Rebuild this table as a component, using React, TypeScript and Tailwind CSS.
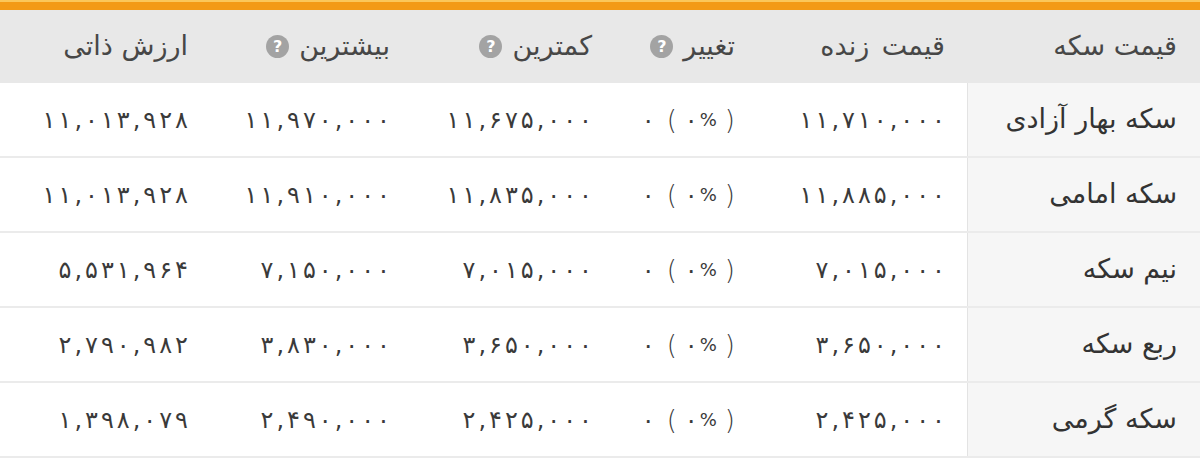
import React from "react";

const rows = [
  ["سکه بهار آزادی", "۱۱,۷۱۰,۰۰۰", "۱۱,۶۷۵,۰۰۰", "۱۱,۹۷۰,۰۰۰", "۱۱,۰۱۳,۹۲۸"],
  ["سکه امامی", "۱۱,۸۸۵,۰۰۰", "۱۱,۸۳۵,۰۰۰", "۱۱,۹۱۰,۰۰۰", "۱۱,۰۱۳,۹۲۸"],
  ["نیم سکه", "۷,۰۱۵,۰۰۰", "۷,۰۱۵,۰۰۰", "۷,۱۵۰,۰۰۰", "۵,۵۳۱,۹۶۴"],
  ["ربع سکه", "۳,۶۵۰,۰۰۰", "۳,۶۵۰,۰۰۰", "۳,۸۳۰,۰۰۰", "۲,۷۹۰,۹۸۲"],
  ["سکه گرمی", "۲,۴۲۵,۰۰۰", "۲,۴۲۵,۰۰۰", "۲,۴۹۰,۰۰۰", "۱,۳۹۸,۰۷۹"],
];

function Q() {
  return (
    <span className="inline-flex h-[23px] w-[23px] shrink-0 items-center justify-center rounded-full bg-[#a3a3a3] text-[16px] font-bold leading-none text-white [font-family:'DejaVu_Sans',sans-serif]">
      ?
    </span>
  );
}

function Num({ v }: { v: string }) {
  return (
    <span dir="ltr" className="flex gap-[3px] text-[24px] leading-none text-[#3a3a3a]">
      {v.split("").map((c, i) => (
        <span key={i}>{c}</span>
      ))}
    </span>
  );
}

export default function App() {
  const grid = "grid grid-cols-[233px_210px_143px_202px_202px_210px]";
  return (
    <div dir="rtl" className="w-[1200px] h-[458px] overflow-hidden bg-white [font-family:'DejaVu_Sans',sans-serif] text-[#333]">
      <div className="h-[2px] bg-[#fbc75a]" />
      <div className="h-[8px] bg-[#f39a16]" />
      <div className={`${grid} h-[73px] bg-[#e8e8e8] text-[27px] text-[#474747]`}>
        <div className="flex items-center pr-[23px]">قیمت سکه</div>
        <div className="flex items-center pr-[22px] [word-spacing:4px]">قیمت زنده</div>
        <div className="flex items-center gap-[10px] pr-[22px]">
          <span>تغییر</span>
          <Q />
        </div>
        <div className="flex items-center gap-[10px] pr-[22px]">
          <span>کمترین</span>
          <Q />
        </div>
        <div className="flex items-center gap-[10px] pr-[22px]">
          <span>بیشترین</span>
          <Q />
        </div>
        <div className="flex items-center pr-[22px]">ارزش ذاتی</div>
      </div>
      {rows.map((r, i) => (
        <div key={i} className={`${grid} h-[75px] border-b-2 border-[#ebebeb]`}>
          <div className="flex items-center pr-[23px] bg-[#f6f6f6] border-l border-[#e3e3e3] text-[27px] text-[#333]">
            {r[0]}
          </div>
          <div className="flex items-center pr-[22px]">
            <Num v={r[1]} />
          </div>
          <div className="flex items-center pr-[22px]">
            <div dir="ltr" className="flex items-center text-[24px] leading-none text-[#3a3a3a]">
              <span>۰</span>
              <span className="ml-[12px] text-[26px] font-light">(</span>
              <span className="ml-[8px]">۰</span>
              <span className="ml-[2px] text-[18px]">%</span>
              <span className="ml-[8px] text-[26px] font-light">)</span>
            </div>
          </div>
          <div className="flex items-center pr-[22px]">
            <Num v={r[2]} />
          </div>
          <div className="flex items-center pr-[22px]">
            <Num v={r[3]} />
          </div>
          <div className="flex items-center pr-[22px]">
            <Num v={r[4]} />
          </div>
        </div>
      ))}
    </div>
  );
}
